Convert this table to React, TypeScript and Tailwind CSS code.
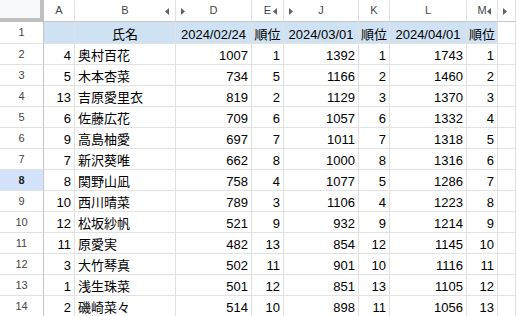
type Row = {
  a: number;
  name: string;
  d: number;
  e: number;
  j: number;
  k: number;
  l: number;
  m: number;
};

const rows: Row[] = [
  { a: 4, name: "奥村百花", d: 1007, e: 1, j: 1392, k: 1, l: 1743, m: 1 },
  { a: 5, name: "木本杏菜", d: 734, e: 5, j: 1166, k: 2, l: 1460, m: 2 },
  { a: 13, name: "吉原愛里衣", d: 819, e: 2, j: 1129, k: 3, l: 1370, m: 3 },
  { a: 6, name: "佐藤広花", d: 709, e: 6, j: 1057, k: 6, l: 1332, m: 4 },
  { a: 9, name: "高島柚愛", d: 697, e: 7, j: 1011, k: 7, l: 1318, m: 5 },
  { a: 7, name: "新沢葵唯", d: 662, e: 8, j: 1000, k: 8, l: 1316, m: 6 },
  { a: 8, name: "関野山凪", d: 758, e: 4, j: 1077, k: 5, l: 1286, m: 7 },
  { a: 10, name: "西川晴菜", d: 789, e: 3, j: 1106, k: 4, l: 1223, m: 8 },
  { a: 12, name: "松坂紗帆", d: 521, e: 9, j: 932, k: 9, l: 1214, m: 9 },
  { a: 11, name: "原愛実", d: 482, e: 13, j: 854, k: 12, l: 1145, m: 10 },
  { a: 3, name: "大竹琴真", d: 502, e: 11, j: 901, k: 10, l: 1116, m: 11 },
  { a: 1, name: "浅生珠菜", d: 501, e: 12, j: 851, k: 13, l: 1105, m: 12 },
  { a: 2, name: "磯崎菜々", d: 514, e: 10, j: 898, k: 11, l: 1056, m: 13 },
];

const cols = "grid grid-cols-[44px_31px_101px_76px_32px_75px_31px_77px_31px_18px]";

function LeftArrow() {
  return (
    <svg width="4" height="7" viewBox="0 0 4 7" className="absolute right-[6px] top-[8px]">
      <path d="M4 0 L0 3.5 L4 7 Z" fill="#5f6368" />
    </svg>
  );
}

function RightArrow() {
  return (
    <svg width="4" height="7" viewBox="0 0 4 7" className="absolute left-[5px] top-[8px]">
      <path d="M0 0 L4 3.5 L0 7 Z" fill="#5f6368" />
    </svg>
  );
}

function ColHead({ label, left, right }: { label?: string; left?: boolean; right?: boolean }) {
  return (
    <div className="relative flex h-[22px] items-center justify-center border-b border-r border-b-[#c4c7c5] border-r-[#e1e1e1] bg-white text-[11px] text-[#444746]">
      {label}
      {left && <LeftArrow />}
      {right && <RightArrow />}
    </div>
  );
}

function Cell({
  children,
  align = "right",
  className = "",
}: {
  children?: React.ReactNode;
  align?: "left" | "right" | "center";
  className?: string;
}) {
  const al =
    align === "left" ? "justify-start pl-[3px]" : align === "center" ? "justify-center" : "justify-end pr-[3px]";
  return (
    <div
      className={`flex items-end overflow-hidden whitespace-nowrap border-b border-r border-[#e2e2e2] text-[13px] leading-[17px] text-black ${al} ${className}`}
    >
      {children}
    </div>
  );
}

function RowHead({ n, active }: { n: number; active?: boolean }) {
  return (
    <div
      className={`flex items-center justify-center border-b border-r border-b-[#e1e1e1] border-r-[#c4c7c5] text-[11px] ${
        active ? "bg-[#d3e3fd] font-bold text-[#1f1f1f]" : "bg-white text-[#444746]"
      }`}
    >
      {n}
    </div>
  );
}

export default function App() {
  return (
    <div
      className="h-[316px] w-[516px] overflow-hidden bg-white"
      style={{ fontFamily: '"Liberation Sans", Arial, "Noto Sans CJK JP", sans-serif' }}
    >
      {/* column headers */}
      <div className={cols}>
        <div className="h-[22px] border-b-4 border-r-4 border-[#c0c0c0] bg-[#f8f9fa]" />
        <ColHead label="A" />
        <ColHead label="B" left />
        <ColHead label="D" right />
        <ColHead label="E" left />
        <ColHead label="J" right />
        <ColHead label="K" />
        <ColHead label="L" />
        <ColHead label="M" left />
        <ColHead right />
      </div>

      {/* row 1: headings */}
      <div className={`${cols} h-[22px]`}>
        <RowHead n={1} />
        <Cell className="bg-[#cfe2f3] border-[#c9d8e6]" />
        <Cell align="center" className="bg-[#cfe2f3] border-[#c9d8e6]">氏名</Cell>
        <Cell align="center" className="bg-[#cfe2f3] border-[#c9d8e6]">2024/02/24</Cell>
        <Cell align="center" className="bg-[#cfe2f3] border-[#c9d8e6]">順位</Cell>
        <Cell align="center" className="bg-[#cfe2f3] border-[#c9d8e6]">2024/03/01</Cell>
        <Cell align="center" className="bg-[#cfe2f3] border-[#c9d8e6]">順位</Cell>
        <Cell align="center" className="bg-[#cfe2f3] border-[#c9d8e6]">2024/04/01</Cell>
        <Cell align="center" className="bg-[#cfe2f3] border-[#c9d8e6]">順位</Cell>
        <Cell />
      </div>

      {rows.map((r, i) => (
        <div key={r.name} className={`${cols} h-[21px]`}>
          <RowHead n={i + 2} active={i + 2 === 8} />
          <Cell>{r.a}</Cell>
          <Cell align="left">{r.name}</Cell>
          <Cell>{r.d}</Cell>
          <Cell>{r.e}</Cell>
          <Cell>{r.j}</Cell>
          <Cell>{r.k}</Cell>
          <Cell>{r.l}</Cell>
          <Cell>{r.m}</Cell>
          <Cell />
        </div>
      ))}
    </div>
  );
}
